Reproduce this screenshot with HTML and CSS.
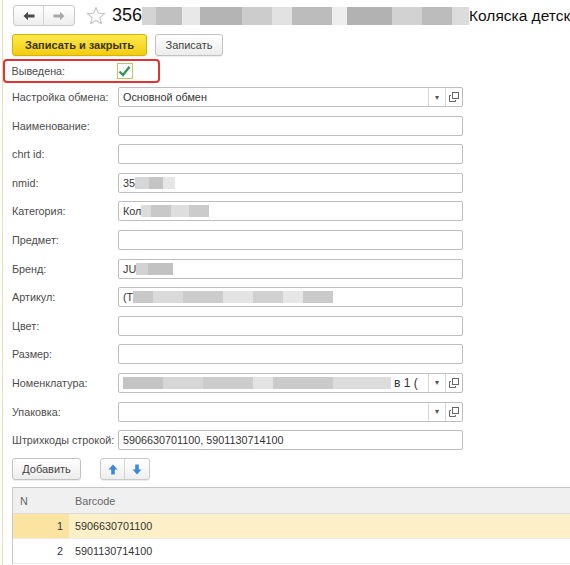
FILE: index.html
```html
<!DOCTYPE html>
<html lang="ru">
<head>
<meta charset="utf-8">
<title>Форма</title>
<link rel="stylesheet" href="styles.css">
</head>
<body>
<div class="page">
  <div class="titlebar">
    <div class="navgroup">
      <span class="navbtn back"><svg width="12" height="10" viewBox="0 0 12 10"><path d="M0.5 5 L5 0.8 V3.6 H11.5 V6.4 H5 V9.2 Z" fill="#4a4a4a"/></svg></span>
      <span class="navbtn fwd"><svg width="12" height="10" viewBox="0 0 12 10"><path d="M11.5 5 L7 0.8 V3.6 H0.5 V6.4 H7 V9.2 Z" fill="#a8a8a8"/></svg></span>
    </div>
    <svg class="star" width="20" height="20" viewBox="0 0 20 20"><path d="M10 1.5 L12.4 7.3 L18.6 7.6 L13.8 11.6 L15.4 17.7 L10 14.3 L4.6 17.7 L6.2 11.6 L1.4 7.6 L7.6 7.3 Z" fill="none" stroke="#c4c4c4" stroke-width="1.1" stroke-linejoin="round"/></svg>
    <div class="title"><span>356</span><span class="mosaic mtitle"></span><span class="tname">Коляска детска</span></div>
  </div>

  <div class="cmdbar">
    <button class="btn primary">Записать и закрыть</button>
    <button class="btn">Записать</button>
  </div>

  <div class="highlight">
    <span class="lbl">Выведена:</span>
    <span class="check"><svg width="13" height="13" viewBox="0 0 13 13"><path d="M1.5 6.5 L5 10 L11.5 1.8" fill="none" stroke="#2a9450" stroke-width="2.2"/></svg></span>
  </div>

  <div class="form">
    <span class="lbl">Настройка обмена:</span>
    <div class="field combo"><span class="val">Основной обмен</span><span class="dd">&#9662;</span><span class="open"><svg width="10" height="10" viewBox="0 0 10 10"><rect x="3.5" y="0.5" width="6" height="6" fill="#fff" stroke="#666"/><path d="M2 3.5 H0.5 V9.5 H6.5 V8" fill="none" stroke="#666"/></svg></span></div>

    <span class="lbl">Наименование:</span>
    <div class="field"></div>

    <span class="lbl">chrt id:</span>
    <div class="field"></div>

    <span class="lbl">nmid:</span>
    <div class="field"><span class="val">35</span><span class="mosaic m1"></span></div>

    <span class="lbl">Категория:</span>
    <div class="field"><span class="val">Кол</span><span class="mosaic m2"></span></div>

    <span class="lbl">Предмет:</span>
    <div class="field"></div>

    <span class="lbl">Бренд:</span>
    <div class="field"><span class="val">JU</span><span class="mosaic m3"></span></div>

    <span class="lbl">Артикул:</span>
    <div class="field"><span class="val">(T</span><span class="mosaic m4"></span></div>

    <span class="lbl">Цвет:</span>
    <div class="field"></div>

    <span class="lbl">Размер:</span>
    <div class="field"></div>

    <span class="lbl">Номенклатура:</span>
    <div class="field combo"><span class="mosaic m5"></span><span class="val tail">в 1 (</span><span class="dd">&#9662;</span><span class="open"><svg width="10" height="10" viewBox="0 0 10 10"><rect x="3.5" y="0.5" width="6" height="6" fill="#fff" stroke="#666"/><path d="M2 3.5 H0.5 V9.5 H6.5 V8" fill="none" stroke="#666"/></svg></span></div>

    <span class="lbl">Упаковка:</span>
    <div class="field combo"><span class="val"></span><span class="dd">&#9662;</span><span class="open"><svg width="10" height="10" viewBox="0 0 10 10"><rect x="3.5" y="0.5" width="6" height="6" fill="#fff" stroke="#666"/><path d="M2 3.5 H0.5 V9.5 H6.5 V8" fill="none" stroke="#666"/></svg></span></div>

    <span class="lbl">Штрихкоды строкой:</span>
    <div class="field"><span class="val">5906630701100, 5901130714100</span></div>
  </div>

  <div class="toolbar">
    <button class="btn">Добавить</button>
    <div class="arrows">
      <span class="arr"><svg width="10" height="11" viewBox="0 0 10 11"><path d="M5 0.5 L9.5 5.5 H6.8 V10.5 H3.2 V5.5 H0.5 Z" fill="#3a8ad8"/></svg></span>
      <span class="arr"><svg width="10" height="11" viewBox="0 0 10 11"><path d="M5 10.5 L9.5 5.5 H6.8 V0.5 H3.2 V5.5 H0.5 Z" fill="#3a8ad8"/></svg></span>
    </div>
  </div>

  <div class="table">
    <div class="trow thead"><span class="cn">N</span><span class="cb">Barcode</span></div>
    <div class="trow sel"><span class="cn num">1</span><span class="cb">5906630701100</span></div>
    <div class="trow"><span class="cn num">2</span><span class="cb">5901130714100</span></div>
  </div>
</div>
</body>
</html>
```

FILE: styles.css
```css
* { box-sizing: border-box; }
html, body { margin: 0; padding: 0; background: #fff; }
body {
  font-family: "Liberation Sans", Arial, sans-serif;
  font-size: 10.8px;
  color: #333;
  width: 570px;
  height: 565px;
  overflow: hidden;
}
.page {
  margin-left: 2px;
  border-left: 1px solid #e6e2b4;
  height: 565px;
  padding: 5px 0 0 9px;
  display: flex;
  flex-direction: column;
}
.titlebar {
  display: flex;
  align-items: center;
  height: 21px;
  white-space: nowrap;
}
.navgroup {
  display: flex;
  margin-left: 1px;
  height: 21px;
  border: 1px solid #c9c9c9;
  border-radius: 3px;
  background: linear-gradient(#ffffff, #eeeeee);
}
.navbtn {
  width: 30px;
  display: flex;
  align-items: center;
  justify-content: center;
}
.navbtn.back { border-right: 1px solid #d4d4d4; }
.star { margin-left: 11px; flex: none; }
.title {
  margin-left: 6px;
  font-size: 18px;
  color: #111;
  display: flex;
  align-items: center;
  overflow: hidden;
  flex: 1;
}
.tname { font-size: 15.5px; }
.mosaic { display: inline-block; flex: none; }
.mtitle {
  width: 327px;
  height: 18px;
  margin-top: 1px;
  background: linear-gradient(90deg, #d4d4d4 0 14px, #c0c0c0 14px 40px, #e8e8e8 40px 58px, #b4b4b4 58px 100px, #cccccc 100px 130px, #e2e2e2 130px 150px, #bcbcbc 150px 190px, #eeeeee 190px 205px, #b2b2b2 205px 250px, #d2d2d2 250px 280px, #bcbcbc 280px 310px, #dcdcdc 310px 327px);
}
.cmdbar {
  display: flex;
  gap: 8px;
  margin-top: 8px;
  height: 22px;
}
.btn {
  font-family: "Liberation Sans", Arial, sans-serif;
  font-size: 11px;
  color: #444;
  height: 22px;
  padding: 0 12px;
  border: 1px solid #c2c2c2;
  border-radius: 3px;
  background: linear-gradient(#ffffff, #ececec);
  box-shadow: 0 1px 1px rgba(0,0,0,0.08);
}
.btn.primary {
  width: 135px;
  padding: 0;
  font-weight: bold;
  color: #3a3300;
  border-color: #d6b200;
  background: linear-gradient(#fce94e, #f3cc10);
}
.cmdbar .btn:not(.primary) { width: 68px; padding: 0; }
.highlight {
  margin: 3px 0 0 -9px;
  width: 157px;
  height: 24px;
  border: 2.5px solid #e03333;
  border-radius: 4px;
  display: flex;
  align-items: center;
  padding-left: 6.5px;
}
.highlight .lbl { width: 105px; }
.check {
  width: 16px;
  height: 16px;
  border: 1px solid #cdbf6a;
  background: #fff;
  display: flex;
  align-items: center;
  justify-content: center;
}
.lbl { color: #4d4d4d; white-space: nowrap; }
.form {
  margin-top: 4px;
  display: grid;
  grid-template-columns: 106px 345px;
  grid-auto-rows: 20px;
  row-gap: 8.6px;
  align-items: center;
}
.field {
  height: 20px;
  border: 1px solid #bdbdbd;
  border-radius: 2px;
  background: #fff;
  display: flex;
  align-items: center;
  padding-left: 4px;
  white-space: nowrap;
  overflow: hidden;
}
.val { color: #333; }
.combo { padding-right: 0; }
.combo .val:first-child { flex: 1; }
.dd, .open {
  flex: none;
  height: 18px;
  display: flex;
  align-items: center;
  justify-content: center;
  border-left: 1px solid #d6d6d6;
}
.dd { width: 17px; font-size: 8px; color: #555; margin-left: auto; }
.open { width: 17px; }
.m1 { width: 40px; height: 12px; background: linear-gradient(90deg, #d6d6d6 0 14px, #c4c4c4 14px 28px, #e6e6e6 28px 40px); }
.m2 { width: 68px; height: 12px; background: linear-gradient(90deg, #dcdcdc 0 10px, #c8c8c8 10px 30px, #dedede 30px 48px, #cbcbcb 48px 68px); }
.m3 { width: 37px; height: 12px; background: linear-gradient(90deg, #d2d2d2 0 12px, #c2c2c2 12px 37px); }
.m4 { width: 200px; height: 12px; background: linear-gradient(90deg, #c8c8c8 0 20px, #dadada 20px 50px, #cccccc 50px 90px, #e4e4e4 90px 120px, #d0d0d0 120px 150px, #e6e6e6 150px 170px, #cacaca 170px 200px); }
.m5 { width: 268px; height: 12px; background: linear-gradient(90deg, #c4c4c4 0 40px, #d6d6d6 40px 80px, #cccccc 80px 130px, #e2e2e2 130px 150px, #cacaca 150px 210px, #dcdcdc 210px 268px); }
.tail { margin-left: 3px; flex: 1; overflow: hidden; font-size: 12px; }
.toolbar {
  margin-top: 8px;
  display: flex;
  gap: 19px;
  height: 22px;
}
.toolbar .btn { width: 69px; padding: 0; }
.arrows {
  display: flex;
  height: 22px;
  border: 1px solid #c9c9c9;
  border-radius: 3px;
  background: linear-gradient(#ffffff, #eeeeee);
  box-shadow: 0 1px 1px rgba(0,0,0,0.08);
}
.arr {
  width: 24px;
  display: flex;
  align-items: center;
  justify-content: center;
}
.arr:first-child { border-right: 1px solid #d6d6d6; }
.table {
  margin-top: 7px;
  margin-right: -20px;
  border-top: 1px solid #c4c4c4;
  border-left: 1px solid #c8c8c8;
}
.trow {
  display: flex;
  height: 25px;
  align-items: center;
  border-bottom: 1px solid #ececec;
}
.thead {
  height: 26px;
  background: #f0f0f0;
  border-bottom: 1px solid #dcdcdc;
  color: #666;
}
.cn { width: 56px; padding-left: 7px; height: 100%; display: flex; align-items: center; }
.cn.num { justify-content: flex-end; padding: 0 6px 0 0; }
.cb { padding-left: 6px; }
.sel { background: #fdf0c8; }
.sel .cn { background: #fbe4a2; }
```
